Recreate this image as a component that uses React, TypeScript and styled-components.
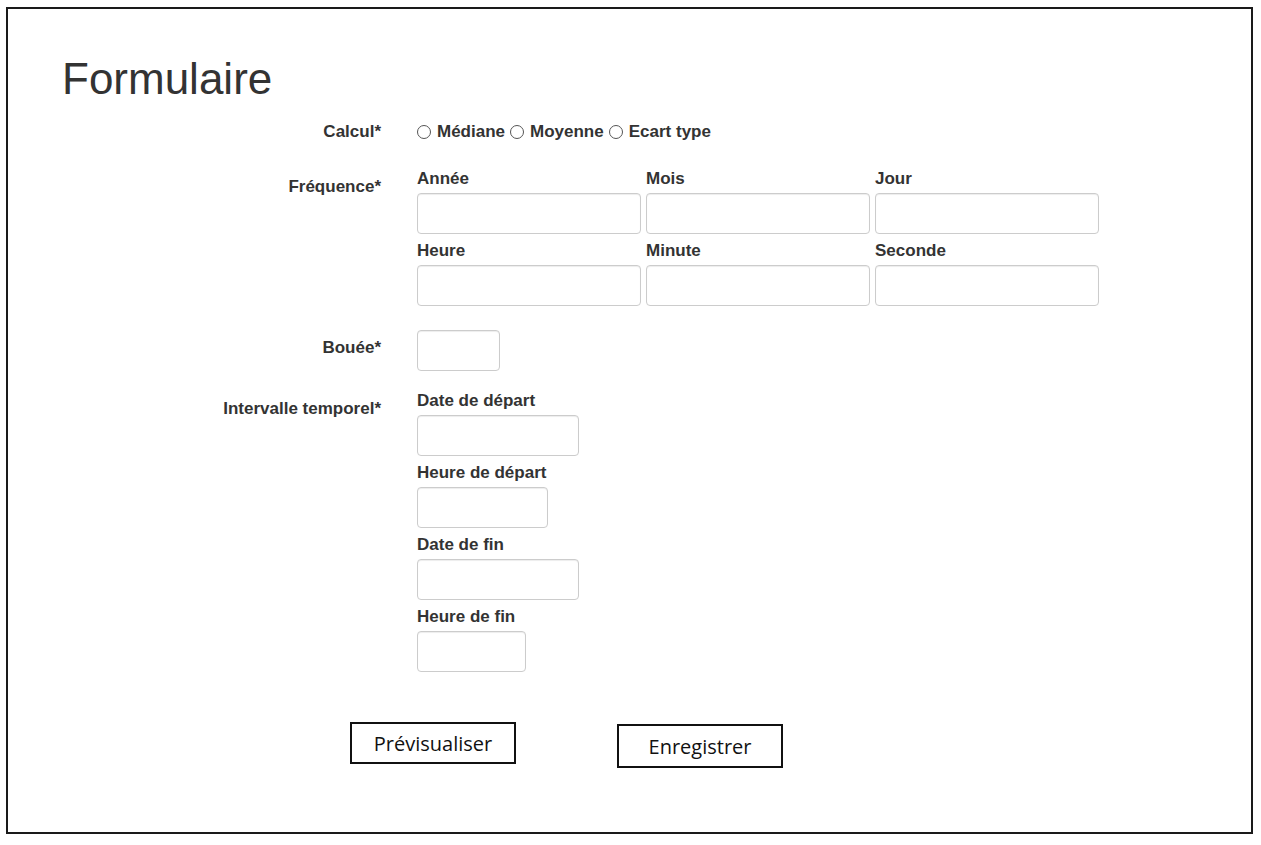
import React from 'react';
import styled, { createGlobalStyle } from 'styled-components';

const GlobalStyle = createGlobalStyle`
  html, body {
    margin: 0;
    padding: 0;
    background: #ffffff;
  }
  body {
    font-family: "Liberation Sans", Arial, sans-serif;
    color: #333333;
  }
  * {
    box-sizing: border-box;
  }
`;

const frequencyFields = ['Année', 'Mois', 'Jour', 'Heure', 'Minute', 'Seconde'];

const intervalFields = [
  { label: 'Date de départ', width: 162 },
  { label: 'Heure de départ', width: 131 },
  { label: 'Date de fin', width: 162 },
  { label: 'Heure de fin', width: 109 },
];

const calculOptions = ['Médiane', 'Moyenne', 'Ecart type'];

const App = () => {
  return (
    <>
      <GlobalStyle />
      <Frame>
        <Title>Formulaire</Title>
        <Form onSubmit={(e) => e.preventDefault()}>
          <Row $spacing={27}>
            <RowLabel>Calcul*</RowLabel>
            <RadioGroup>
              {calculOptions.map((option) => (
                <RadioOption key={option}>
                  <Radio type="radio" name="calcul" value={option} />
                  {option}
                </RadioOption>
              ))}
            </RadioGroup>
          </Row>

          <Row $spacing={24}>
            <RowLabel>Fréquence*</RowLabel>
            <FieldGrid>
              {frequencyFields.map((field) => (
                <Field key={field}>
                  <FieldLabel>{field}</FieldLabel>
                  <TextInput type="text" $w={224} />
                </Field>
              ))}
            </FieldGrid>
          </Row>

          <Row $spacing={20}>
            <RowLabel>Bouée*</RowLabel>
            <div>
              <TextInput type="text" $w={83} />
            </div>
          </Row>

          <Row $spacing={50}>
            <RowLabel>Intervalle temporel*</RowLabel>
            <FieldStack>
              {intervalFields.map((field) => (
                <Field key={field.label}>
                  <FieldLabel>{field.label}</FieldLabel>
                  <TextInput type="text" $w={field.width} />
                </Field>
              ))}
            </FieldStack>
          </Row>

          <ButtonBar>
            <ActionButton type="button">Prévisualiser</ActionButton>
            <ActionButton type="submit" $drop={2} $tall>
              Enregistrer
            </ActionButton>
          </ButtonBar>
        </Form>
      </Frame>
    </>
  );
};

export default App;

const Frame = styled.div`
  margin: 7px 0 0 6px;
  width: 1247px;
  height: 827px;
  border: 2px solid #1a1a1a;
  padding-top: 46px;
  display: flex;
  flex-direction: column;
`;

const Title = styled.h1`
  margin: 0;
  padding-left: 54px;
  font-family: "Liberation Sans", Arial, sans-serif;
  font-size: 44px;
  line-height: 48px;
  font-weight: 400;
  color: #333333;
`;

const Form = styled.form`
  margin-top: 11px;
  display: flex;
  flex-direction: column;
`;

const Row = styled.div<{ $spacing: number }>`
  display: grid;
  grid-template-columns: 373px 1fr;
  column-gap: 36px;
  align-items: start;
  margin-bottom: ${(p) => p.$spacing}px;
`;

const RowLabel = styled.label`
  padding-top: 8px;
  text-align: right;
  font-size: 17px;
  line-height: 20px;
  font-weight: 700;
  color: #333333;
`;

const RadioGroup = styled.div`
  padding-top: 8px;
  height: 28px;
  display: flex;
  align-items: center;
  gap: 5px;
`;

const RadioOption = styled.label`
  display: flex;
  align-items: center;
  font-size: 17px;
  line-height: 20px;
  font-weight: 700;
  color: #333333;
`;

const Radio = styled.input`
  appearance: none;
  width: 14px;
  height: 14px;
  margin: 0 6px 0 0;
  border: 1px solid #555555;
  border-radius: 50%;
  background: #ffffff;
  &:checked {
    background: radial-gradient(circle, #333333 0 3px, #ffffff 3.5px);
  }
`;

const FieldGrid = styled.div`
  display: grid;
  grid-template-columns: repeat(3, 224px);
  column-gap: 5px;
  row-gap: 7px;
`;

const FieldStack = styled.div`
  display: flex;
  flex-direction: column;
  gap: 7px;
`;

const Field = styled.div`
  display: flex;
  flex-direction: column;
`;

const FieldLabel = styled.label`
  margin-bottom: 4px;
  font-size: 17px;
  line-height: 20px;
  font-weight: 700;
  color: #333333;
`;

const TextInput = styled.input<{ $w: number }>`
  width: ${(p) => p.$w}px;
  height: 41px;
  padding: 6px 12px;
  border: 1px solid #cccccc;
  border-radius: 4px;
  box-shadow: inset 0 1px 1px rgba(0, 0, 0, 0.075);
  background: #ffffff;
  font-family: "Liberation Sans", Arial, sans-serif;
  font-size: 14px;
  color: #555555;
  outline: none;
`;

const ButtonBar = styled.div`
  display: flex;
  align-items: flex-start;
  gap: 101px;
  padding-left: 342px;
`;

const ActionButton = styled.button<{ $drop?: number; $tall?: boolean }>`
  width: 166px;
  height: ${(p) => (p.$tall ? 44 : 42)}px;
  margin-top: ${(p) => p.$drop ?? 0}px;
  border: 2px solid #111111;
  border-radius: 0;
  background: #ffffff;
  font-family: "Open Sans", Lato, sans-serif;
  font-size: 20px;
  font-weight: 400;
  color: #111111;
  cursor: pointer;
`;
